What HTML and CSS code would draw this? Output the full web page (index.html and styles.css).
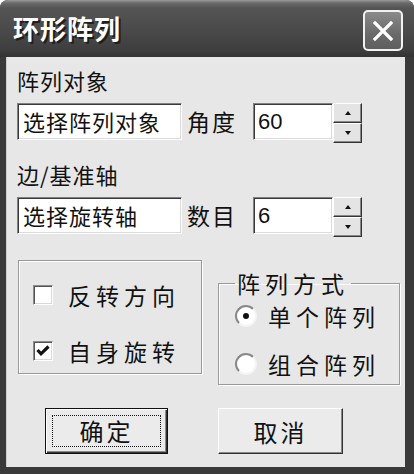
FILE: index.html
```html
<!DOCTYPE html>
<html lang="zh-CN">
<head>
  <meta charset="UTF-8" />
  <title>环形阵列</title>
  <link rel="stylesheet" href="styles.css">
</head>
<body>

  <div class="window">
    <!-- title bar -->
    <header class="titlebar">
      <span class="title">环形阵列</span>
      <button class="close" type="button">
        <svg width="22" height="22" viewBox="0 0 22 22">
          <path d="M3 3 L19 19 M19 3 L3 19" stroke="#fff" stroke-width="3.2" stroke-linecap="square" />
        </svg>
      </button>
    </header>

    <!-- dialog body -->
    <main class="body">
      <div class="label">阵列对象</div>
      <div class="row">
        <div class="field text">选择阵列对象</div>
        <span class="row-label">角度</span>
        <div class="field num">60</div>
        <div class="spin">
          <span class="spin-btn"><i class="arrow up"></i></span>
          <span class="spin-btn"><i class="arrow down"></i></span>
        </div>
      </div>

      <div class="label second">边/基准轴</div>
      <div class="row">
        <div class="field text">选择旋转轴</div>
        <span class="row-label">数目</span>
        <div class="field num">6</div>
        <div class="spin">
          <span class="spin-btn"><i class="arrow up"></i></span>
          <span class="spin-btn"><i class="arrow down"></i></span>
        </div>
      </div>

      <div class="groups">
        <div class="group checks">
          <label class="option">
            <span class="checkbox"></span>
            <span class="opt-text">反转方向</span>
          </label>
          <label class="option">
            <span class="checkbox">
              <svg width="14" height="12" viewBox="0 0 14 12">
                <path d="M1.5 5 L5 8.8 L12.5 1.5" fill="none" stroke="#111" stroke-width="3.2" />
              </svg>
            </span>
            <span class="opt-text">自身旋转</span>
          </label>
        </div>

        <fieldset class="group radios">
          <legend>阵列方式</legend>
          <label class="option">
            <span class="radio checked"></span>
            <span class="opt-text">单个阵列</span>
          </label>
          <label class="option">
            <span class="radio"></span>
            <span class="opt-text">组合阵列</span>
          </label>
        </fieldset>
      </div>

      <div class="buttons">
        <button class="btn default" type="button"><span class="focus">确定</span></button>
        <button class="btn" type="button">取消</button>
      </div>
    </main>
  </div>

</body>
</html>
```

FILE: styles.css
```css
* {
  margin: 0;
  padding: 0;
  box-sizing: border-box;
  font-family: "Noto Sans CJK SC", "Liberation Sans", sans-serif;
}

body {
  width: 414px;
  height: 474px;
  background: #fff;
}

/* Window frame */
.window {
  width: 414px;
  height: 474px;
  display: flex;
  flex-direction: column;
  background: #3a3a3a;
  border-radius: 8px 8px 0 0;
  overflow: hidden;
}

.titlebar {
  height: 57px;
  display: flex;
  align-items: flex-start;
  justify-content: space-between;
  padding: 0 11px 0 13px;
  background: linear-gradient(180deg, #9a9a9a 0, #6a6a6a 3px, #555 8px, #4a4a4a 30px, #3e3e3e 50px, #333 57px);
}

.title {
  margin-top: 13px;
  font-size: 26px;
  line-height: 30px;
  font-weight: 700;
  letter-spacing: 1px;
  color: #fff;
  text-shadow: 2px 2px 0 #1e1e1e;
}

.close {
  margin-top: 10px;
  width: 40px;
  height: 41px;
  display: flex;
  align-items: center;
  justify-content: center;
  border: 2px solid #f2f2f2;
  border-radius: 5px;
  background: linear-gradient(180deg, #8a8a8a, #6a6a6a 60%, #5e5e5e);
}

/* Body */
.body {
  flex: 1;
  margin: 0 9px 7px 6px;
  padding: 11px 0 0 11px;
  background: #e7e7e7;
  box-shadow: inset 1px 0 0 #cfcfcf;
  color: #111;
}

.label {
  font-size: 22px;
  line-height: 24px;
  letter-spacing: 1px;
}

.label.second {
  margin-top: 19px;
}

.row {
  margin-top: 11px;
  height: 40px;
  display: flex;
  align-items: flex-start;
}

.field {
  height: 37px;
  background: #fff;
  border: 1px solid;
  border-color: #808080 #fff #fff #808080;
  box-shadow: inset 1px 1px 0 #3a3a3a, inset -1px -1px 0 #dadada;
  font-size: 22px;
  line-height: 35px;
  white-space: nowrap;
}

.field.text {
  width: 165px;
  padding-left: 5px;
  letter-spacing: 1px;
}

.field.num {
  width: 80px;
  margin-left: 16px;
  padding-left: 4px;
  font-family: "Liberation Sans", sans-serif;
}

.row-label {
  width: 50px;
  margin-left: 5px;
  font-size: 23px;
  line-height: 37px;
  letter-spacing: 2px;
  white-space: nowrap;
}

.spin {
  width: 29px;
  display: flex;
  flex-direction: column;
}

.spin-btn {
  height: 20px;
  display: flex;
  align-items: center;
  justify-content: center;
  background: #e4e4e4;
  border: 1px solid;
  border-color: #fff #333 #333 #fff;
  box-shadow: inset -1px -1px 0 #888;
}

.arrow {
  width: 0;
  height: 0;
  border-left: 3px solid transparent;
  border-right: 3px solid transparent;
}

.arrow.up {
  border-bottom: 4px solid #111;
}

.arrow.down {
  border-top: 4px solid #111;
}

/* Option groups */
.groups {
  margin-top: 23px;
  display: flex;
  align-items: flex-start;
}

.group {
  border: 1px solid #999;
  box-shadow: 1px 1px 0 #fff, inset 1px 1px 0 #fff;
}

.checks {
  margin-left: 1px;
  width: 184px;
  height: 114px;
  padding: 22px 0 0 14px;
  display: flex;
  flex-direction: column;
  gap: 32px;
}

.radios {
  margin: 11px 0 0 16px;
  width: 182px;
  height: 114px;
  padding: 9px 0 0 16px;
  display: flex;
  flex-direction: column;
  gap: 24px;
}

.radios legend {
  margin-left: 0;
  padding: 0 2px;
  font-size: 23px;
  line-height: 24px;
  letter-spacing: 5px;
}

.option {
  height: 24px;
  display: flex;
  align-items: center;
}

.opt-text {
  font-size: 23px;
  line-height: 24px;
  letter-spacing: 5px;
  white-space: nowrap;
}

.checkbox {
  width: 20px;
  height: 20px;
  margin-right: 15px;
  display: flex;
  align-items: center;
  justify-content: center;
  background: #fff;
  border: 1px solid;
  border-color: #8a8a8a #fff #fff #8a8a8a;
  box-shadow: inset 1px 1px 0 #555, inset -1px -1px 0 #d8d8d8;
}

.radio {
  width: 22px;
  height: 22px;
  margin-right: 11px;
  display: flex;
  align-items: center;
  justify-content: center;
  border-radius: 50%;
  background: #fff;
  border: 2px solid;
  border-color: #888 #f4f4f4 #f4f4f4 #888;
}

.radio.checked::after {
  content: "";
  width: 6px;
  height: 6px;
  border-radius: 50%;
  background: #111;
}

/* Buttons */
.buttons {
  margin: 23px 0 0 28px;
  display: flex;
  gap: 50px;
}

.btn {
  width: 125px;
  height: 46px;
  display: flex;
  align-items: center;
  justify-content: center;
  background: #ebebeb;
  border: 1px solid;
  border-color: #fff #333 #333 #fff;
  box-shadow: inset -1px -1px 0 #888;
  font-size: 24px;
  letter-spacing: 3px;
  color: #111;
}

.btn.default {
  width: 123px;
  border: 1px solid #111;
  box-shadow: inset 1px 1px 0 #fff, inset -1px -1px 0 #333, inset -2px -2px 0 #888;
  padding: 6px;
}

.btn .focus {
  width: 100%;
  height: 100%;
  display: flex;
  align-items: center;
  justify-content: center;
  border: 1px dotted #111;
  line-height: 30px;
}
```
